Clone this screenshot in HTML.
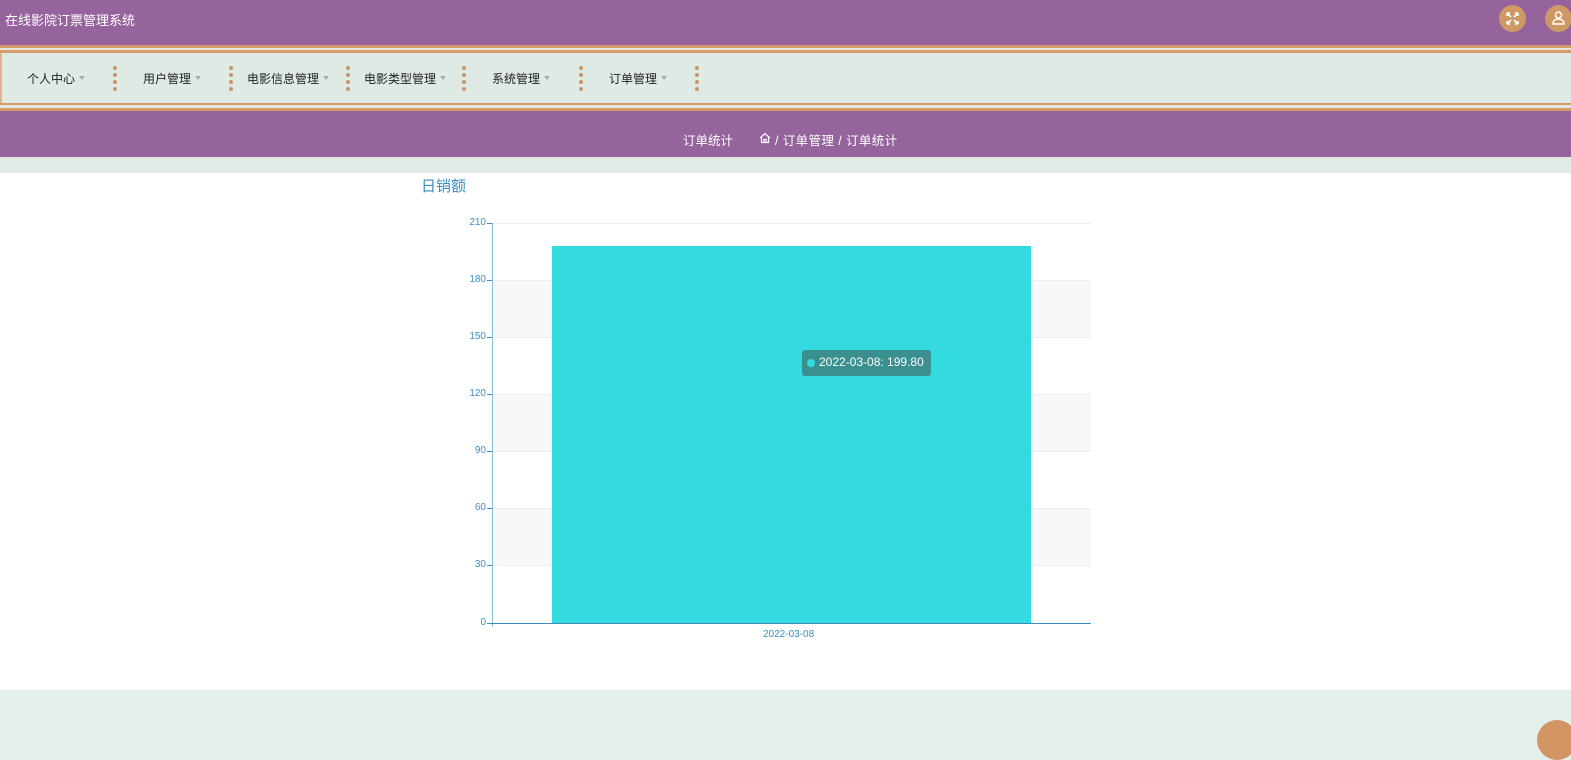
<!DOCTYPE html>
<html><head><meta charset="utf-8"><style>
*{margin:0;padding:0;box-sizing:border-box}
body{width:1571px;height:757px;overflow:hidden;background:#e6f0eb;font-family:"Liberation Sans","Noto Sans CJK SC",sans-serif;position:relative}
.a{position:absolute}
.nav span.t{position:absolute;top:70px;font-size:12px;color:#222}
.tri{display:inline-block;width:0;height:0;border-left:3px solid transparent;border-right:3px solid transparent;border-top:4px solid #aaa;margin-left:4px;vertical-align:middle;position:relative;top:-2px}
.dots{position:absolute;top:66px;width:4px}
.dots i{display:block;width:4px;height:4px;border-radius:2px;background:#c9956a;margin-bottom:3px}
.yl{position:absolute;left:440px;width:46px;text-align:right;font-size:10px;color:#3a8fc0}
.tk{position:absolute;left:487px;width:5px;height:1px;background:#3a8fc0}
.gl{position:absolute;left:493px;width:598px;height:1px;background:#eceef0}
</style></head><body>
<div class="a" style="left:0;top:0;width:1571px;height:45px;background:#96649c"></div>
<div class="a" style="left:5px;top:10px;color:#fff;font-size:13px">在线影院订票管理系统</div>
<div class="a" style="left:1499px;top:5px;width:27px;height:27px;border-radius:50%;background:#cf9966"></div>
<svg class="a" style="left:1505px;top:11px" width="15" height="15" viewBox="0 0 15 15" fill="none" stroke="#fff" stroke-width="1.6"><path d="M2 2l4 4M13 2l-4 4M2 13l4-4M13 13l-4-4M2 2h3M2 2v3M13 2h-3M13 2v3M2 13h3M2 13v-3M13 13h-3M13 13v-3"/></svg>
<div class="a" style="left:1545px;top:5px;width:27px;height:27px;border-radius:50%;background:#cf9966"></div>
<svg class="a" style="left:1551px;top:10px" width="15" height="16" viewBox="0 0 15 16" fill="none" stroke="#fff" stroke-width="1.4"><circle cx="7.5" cy="5" r="3"/><path d="M2 14c0-3 2-5 5.5-5s5.5 2 5.5 5z"/></svg>
<div class="a" style="left:0;top:45px;width:1571px;height:3px;background:#d49c6b"></div>
<div class="a" style="left:0;top:48px;width:1571px;height:2px;background:#e8e6dc"></div>
<div class="a" style="left:0;top:50px;width:1571px;height:3px;background:#d49c6b"></div>
<div class="a" style="left:0;top:53px;width:1571px;height:50px;background:#dfeae4;border-left:2px solid #e3b58d"></div>
<div class="a" style="left:0;top:103px;width:1571px;height:2px;background:#d49c6b"></div>
<div class="a" style="left:0;top:105px;width:1571px;height:3px;background:#e8e6dc"></div>
<div class="a" style="left:0;top:108px;width:1571px;height:3px;background:#d49c6b"></div>
<div class="nav">
<span class="t" style="left:27px">个人中心<i class="tri"></i></span>
<div class="dots" style="left:113px"><i></i><i></i><i></i><i></i></div>
<span class="t" style="left:143px">用户管理<i class="tri"></i></span>
<div class="dots" style="left:229px"><i></i><i></i><i></i><i></i></div>
<span class="t" style="left:247px">电影信息管理<i class="tri"></i></span>
<div class="dots" style="left:346px"><i></i><i></i><i></i><i></i></div>
<span class="t" style="left:364px">电影类型管理<i class="tri"></i></span>
<div class="dots" style="left:462px"><i></i><i></i><i></i><i></i></div>
<span class="t" style="left:492px">系统管理<i class="tri"></i></span>
<div class="dots" style="left:579px"><i></i><i></i><i></i><i></i></div>
<span class="t" style="left:609px">订单管理<i class="tri"></i></span>
<div class="dots" style="left:695px"><i></i><i></i><i></i><i></i></div>
</div>
<div class="a" style="left:0;top:111px;width:1571px;height:46px;background:#96649c"></div>
<div class="a" style="left:683px;top:130px;color:#fff;font-size:12.5px">订单统计</div>
<svg class="a" style="left:759px;top:132px" width="12" height="12" viewBox="0 0 12 12" fill="none" stroke="#fff" stroke-width="1.2"><path d="M1 6L6 1.5 11 6M2.5 5v5.5h7V5M5 10.5V7.5h2v3"/></svg>
<div class="a" style="left:775px;top:130px;color:#fff;font-size:12.5px;letter-spacing:0.4px">/ 订单管理 / 订单统计</div>
<div class="a" style="left:0;top:157px;width:1571px;height:16px;background:#e1ebe6"></div>
<div class="a" style="left:0;top:173px;width:1571px;height:517px;background:#fff"></div>
<div class="a" style="left:421px;top:175px;font-size:15px;color:#3a8fc0">日销额</div>
<div class="a" style="left:493px;top:281px;width:598px;height:57px;background:#f7f8fa"></div>
<div class="a" style="left:493px;top:395px;width:598px;height:57px;background:#f7f8fa"></div>
<div class="a" style="left:493px;top:509px;width:598px;height:57px;background:#f7f8fa"></div>
<div class="gl" style="top:223px"></div><div class="gl" style="top:280px"></div><div class="gl" style="top:337px"></div><div class="gl" style="top:394px"></div><div class="gl" style="top:451px"></div><div class="gl" style="top:508px"></div><div class="gl" style="top:565px"></div>
<div class="yl" style="top:217px">210</div><div class="yl" style="top:274px">180</div><div class="yl" style="top:331px">150</div><div class="yl" style="top:388px">120</div><div class="yl" style="top:445px">90</div><div class="yl" style="top:502px">60</div><div class="yl" style="top:559px">30</div><div class="yl" style="top:617px">0</div>
<div class="tk" style="top:223px"></div><div class="tk" style="top:280px"></div><div class="tk" style="top:337px"></div><div class="tk" style="top:394px"></div><div class="tk" style="top:451px"></div><div class="tk" style="top:508px"></div><div class="tk" style="top:565px"></div><div class="tk" style="top:623px"></div>
<div class="a" style="left:492px;top:223px;width:1px;height:404px;background:#8bbfd6"></div>
<div class="a" style="left:552px;top:246px;width:479px;height:377px;background:#33dadf"></div>
<div class="a" style="left:492px;top:623px;width:599px;height:1px;background:#3a8fc0"></div>
<div class="a" style="left:763px;top:629px;font-size:10px;color:#3a8fc0">2022-03-08</div>
<div class="a" style="left:802px;top:350px;width:129px;height:26px;background:#3a8f8f;border-radius:3px"></div>
<div class="a" style="left:807px;top:359px;width:8px;height:8px;border-radius:4px;background:#33dadf"></div>
<div class="a" style="left:819px;top:355px;font-size:12px;color:#fff">2022-03-08: 199.80</div>
<div class="a" style="left:1537px;top:720px;width:40px;height:40px;border-radius:50%;background:#d39563"></div>
</body></html>
